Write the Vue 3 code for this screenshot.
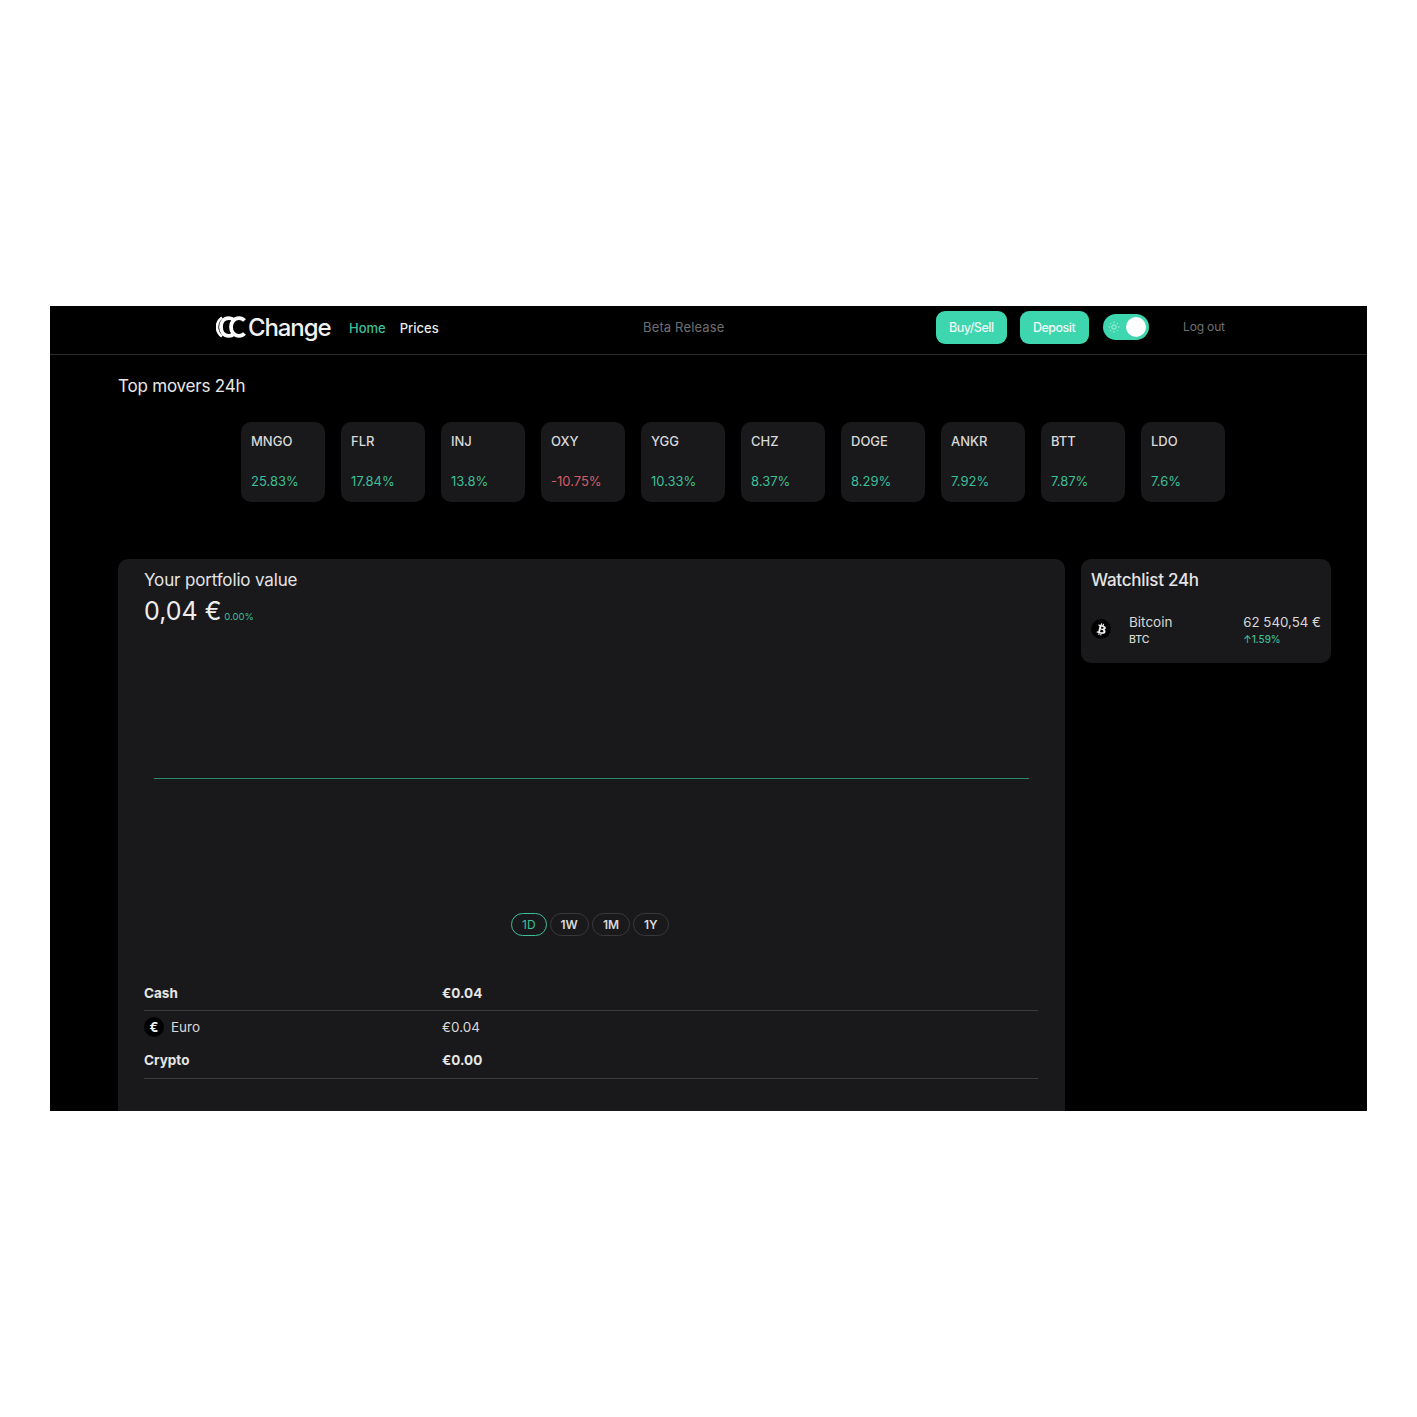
<template>
  <div class="screen">
    <header class="topbar">
      <div class="brand">
        <svg class="brand-mark" width="30" height="24" viewBox="0 0 30 24" fill="none">
          <path d="M6 2.500C2.600 5 1 8.200 1 12s1.600 7 5 9.500" stroke="#fff" stroke-width="2.600" />
          <path d="M18 5.200C16.600 3.900 14.800 3.200 12.800 3.200 8 3.200 5 7 5 12s3 8.800 7.800 8.800c2 0 3.800-.7 5.200-2" stroke="#fff" stroke-width="3.800" />
          <path d="M28.500 5.600C27 3.900 25 3.200 23 3.200 18.200 3.200 15 7 15 12s3.200 8.800 8 8.800c2 0 4-.7 5.500-2.400" stroke="#fff" stroke-width="3.800" />
        </svg>
        <span class="brand-name">Change</span>
      </div>
      <nav class="nav">
        <a class="nav-link active">Home</a>
        <a class="nav-link">Prices</a>
      </nav>
      <div class="beta">Beta Release</div>
      <div class="actions">
        <button class="action">Buy/Sell</button>
        <button class="action">Deposit</button>
        <div class="toggle">
          <svg class="sun" width="12" height="12" viewBox="0 0 12 12" fill="none" stroke="#c9f5e6" stroke-width="0.8">
            <circle cx="6" cy="6" r="2.200" />
            <path d="M6 .5v1.500M6 10v1.500M.5 6H2M10 6h1.500M2.100 2.100l1 1M8.900 8.900l1 1M2.100 9.900l1-1M8.900 3.100l1-1" />
          </svg>
          <span class="knob"></span>
        </div>
      </div>
      <a class="logout">Log out</a>
    </header>

    <main class="content">
      <h2 class="movers-title">Top movers 24h</h2>
      <div class="movers">
        <div v-for="m in movers" :key="m.name" class="mover">
          <div class="mover-name">{{ m.name }}</div>
          <div class="mover-change" :class="{ down: m.change.startsWith('-') }">{{ m.change }}</div>
        </div>
      </div>

      <div class="columns">
        <section class="portfolio">
          <div class="portfolio-title">Your portfolio value</div>
          <div class="portfolio-value">
            <span class="amount">0,04 €</span>
            <span class="amount-change">0.00%</span>
          </div>
          <div class="chart"><div class="chart-line"></div></div>
          <div class="ranges">
            <button v-for="r in ranges" :key="r" class="range" :class="{ selected: r === '1D' }">{{ r }}</button>
          </div>
          <div class="balances">
            <div class="row bold ruled cash">
              <span class="row-label">Cash</span>
              <span>€0.04</span>
            </div>
            <div class="row euro">
              <span class="row-label"><i class="coin">€</i>Euro</span>
              <span>€0.04</span>
            </div>
            <div class="row bold ruled crypto">
              <span class="row-label">Crypto</span>
              <span>€0.00</span>
            </div>
          </div>
        </section>

        <aside class="watchlist">
          <div class="watch-title">Watchlist 24h</div>
          <div class="watch-row">
            <i class="coin btc">
              <svg width="13" height="13" viewBox="5 4 14 16" fill="#f2f2f2" fill-rule="evenodd">
                <path d="M17.288 10.291c.24-1.59-.974-2.45-2.64-3.03l.54-2.153-1.315-.33-.525 2.107c-.345-.087-.705-.167-1.064-.25l.526-2.127-1.32-.33-.54 2.165c-.285-.067-.565-.132-.84-.2l-1.815-.45-.35 1.407s.975.225.955.236c.535.136.63.486.615.766l-1.477 5.92c-.075.166-.24.406-.614.314.015.02-.96-.24-.96-.24l-.66 1.51 1.71.426.93.242-.54 2.19 1.32.327.54-2.17c.36.1.705.19 1.05.273l-.51 2.154 1.32.33.545-2.19c2.24.427 3.93.257 4.64-1.774.57-1.637-.03-2.58-1.217-3.196.854-.193 1.5-.76 1.68-1.93h.01zm-3.01 4.22c-.404 1.64-3.157.75-4.05.53l.72-2.9c.896.23 3.757.67 3.33 2.37zm.41-4.24c-.37 1.49-2.662.735-3.405.55l.654-2.64c.744.18 3.137.524 2.75 2.084v.006z" />
              </svg>
            </i>
            <div class="watch-name">
              <div>Bitcoin</div>
              <small>BTC</small>
            </div>
            <div class="watch-price">
              <div>62 540,54 €</div>
              <small>↑1.59%</small>
            </div>
          </div>
        </aside>
      </div>
    </main>
  </div>
</template>

<script setup>
const movers = [
  { name: 'MNGO', change: '25.83%' },
  { name: 'FLR', change: '17.84%' },
  { name: 'INJ', change: '13.8%' },
  { name: 'OXY', change: '-10.75%' },
  { name: 'YGG', change: '10.33%' },
  { name: 'CHZ', change: '8.37%' },
  { name: 'DOGE', change: '8.29%' },
  { name: 'ANKR', change: '7.92%' },
  { name: 'BTT', change: '7.87%' },
  { name: 'LDO', change: '7.6%' },
]

const ranges = ['1D', '1W', '1M', '1Y']
</script>

<style>
html,
body {
  background: #fff;
}
</style>

<style scoped>
.screen {
  width: 1317px;
  height: 805px;
  margin: 306px 0 0 50px;
  background: #000;
  color: #e6e6e6;
  font-family: Inter, "Noto Sans", sans-serif;
  overflow: hidden;
}

.topbar {
  height: 42px;
  padding-bottom: 6px;
  border-bottom: 1px solid #2a2a2c;
  display: flex;
  align-items: center;
  padding-left: 166px;
}

.brand {
  display: flex;
  align-items: center;
  width: 133px;
}

.brand-mark {
  flex: none;
}

.brand-name {
  color: #f2f2f2;
  font-size: 24px;
  font-weight: 500;
  letter-spacing: -1.100px;
  margin-left: 2px;
}

.nav {
  display: flex;
  gap: 14px;
  width: 294px;
  padding-top: 2px;
}

.nav-link {
  font-size: 13px;
  font-weight: 500;
  color: #ececec;
}

.nav-link.active {
  color: #3dbf98;
}

.beta {
  width: 293px;
  font-size: 13px;
  letter-spacing: 0.15px;
  color: #6f6f72;
}

.actions {
  display: flex;
  align-items: center;
  gap: 13px;
  width: 247px;
}

.action {
  height: 33px;
  min-width: 69px;
  padding: 0 13px;
  border: none;
  border-radius: 9px;
  background: #3ed6ae;
  color: #eefaf6;
  font-family: inherit;
  font-size: 12.500px;
  font-weight: 500;
  letter-spacing: -0.5px;
}

.toggle {
  width: 46px;
  height: 26px;
  margin-left: 1px;
  border-radius: 13px;
  background: #3ed6ae;
  display: flex;
  align-items: center;
  justify-content: space-between;
  padding: 0 3px 0 5px;
  box-sizing: border-box;
}

.knob {
  width: 20px;
  height: 20px;
  border-radius: 50%;
  background: #fff;
}

.logout {
  margin-bottom: 1px;
  font-size: 12px;
  letter-spacing: -0.15px;
  color: #6f6f72;
}

.content {
  padding-left: 68px;
}

.movers-title {
  margin: 20px 0 0;
  font-size: 17px;
  line-height: 22px;
  letter-spacing: -0.2px;
  font-weight: 400;
  color: #e8e8e8;
}

.movers {
  display: flex;
  gap: 16.500px;
  margin: 25px 0 0 123px;
}

.mover {
  width: 83.500px;
  height: 80px;
  padding: 10px 10px 0;
  box-sizing: border-box;
  border-radius: 10px;
  background: #19191b;
}

.mover-name {
  font-size: 13px;
  line-height: 18px;
  font-weight: 500;
  color: #d8d8d8;
}

.mover-change {
  margin-top: 22px;
  font-size: 13px;
  line-height: 18px;
  color: #3dbf98;
}

.mover-change.down {
  color: #d65c68;
}

.columns {
  display: flex;
  align-items: flex-start;
  gap: 16px;
  margin-top: 57px;
}

.portfolio {
  width: 947px;
  height: 600px;
  padding: 10px 27px 0 26px;
  box-sizing: border-box;
  border-radius: 10px;
  background: #19191b;
}

.portfolio-title {
  font-size: 17px;
  line-height: 22px;
  letter-spacing: -0.15px;
  color: #e4e4e4;
}

.portfolio-value {
  display: flex;
  align-items: baseline;
  margin-top: 3px;
}

.amount {
  font-size: 25px;
  line-height: 34px;
  color: #ededed;
}

.amount-change {
  margin-left: 3px;
  font-size: 9.500px;
  color: #3dbf98;
}

.chart {
  height: 270px;
  padding: 15px 9px 0 10px;
  display: flex;
  align-items: center;
}

.chart-line {
  width: 875px;
  height: 1px;
  background: #2b8a6c;
}

.ranges {
  display: flex;
  gap: 3px;
  margin-left: 367px;
}

.range {
  height: 23px;
  padding: 0 10px;
  border: 1px solid #39393c;
  border-radius: 12px;
  background: transparent;
  color: #d8d8d8;
  font-family: inherit;
  font-size: 12px;
  font-weight: 600;
}

.range.selected {
  border-color: #3dbf98;
  color: #3dbf98;
  font-weight: 400;
}

.balances {
  margin-top: 40px;
}

.row {
  display: flex;
  align-items: center;
  font-size: 13.500px;
  color: #d8d8d8;
}

.row-label {
  width: 298px;
  display: flex;
  align-items: center;
}

.row.bold {
  font-weight: 700;
  color: #e6e6e6;
}

.row.ruled {
  border-bottom: 1px solid #3a3a3d;
}

.row.cash {
  height: 34px;
}

.row.euro {
  height: 32px;
}

.row.crypto {
  height: 34px;
  padding-bottom: 1px;
}

.coin {
  width: 20px;
  height: 20px;
  margin-right: 7px;
  border-radius: 50%;
  background: #000;
  color: #f2f2f2;
  font-style: normal;
  font-size: 13px;
  font-weight: 700;
  display: flex;
  align-items: center;
  justify-content: center;
  flex: none;
}

.watchlist {
  width: 250px;
  height: 104px;
  padding: 10px;
  box-sizing: border-box;
  border-radius: 10px;
  background: #19191b;
}

.watch-title {
  font-size: 17px;
  line-height: 22px;
  letter-spacing: -0.25px;
  font-weight: 500;
  color: #e4e4e4;
}

.watch-row {
  display: flex;
  align-items: flex-start;
  margin-top: 22px;
  font-size: 13.500px;
  line-height: 18px;
  color: #d8d8d8;
}

.coin.btc {
  margin-right: 18px;
  margin-top: 6px;
}

.watch-name {
  width: 115px;
}

.watch-name small {
  display: block;
  font-size: 10.500px;
  line-height: 18px;
  font-weight: 500;
}

.watch-price {
  font-size: 13.300px;
  white-space: nowrap;
}

.watch-price small {
  display: block;
  font-size: 9.800px;
  line-height: 18px;
  font-weight: 500;
  color: #3dbf98;
}
</style>
